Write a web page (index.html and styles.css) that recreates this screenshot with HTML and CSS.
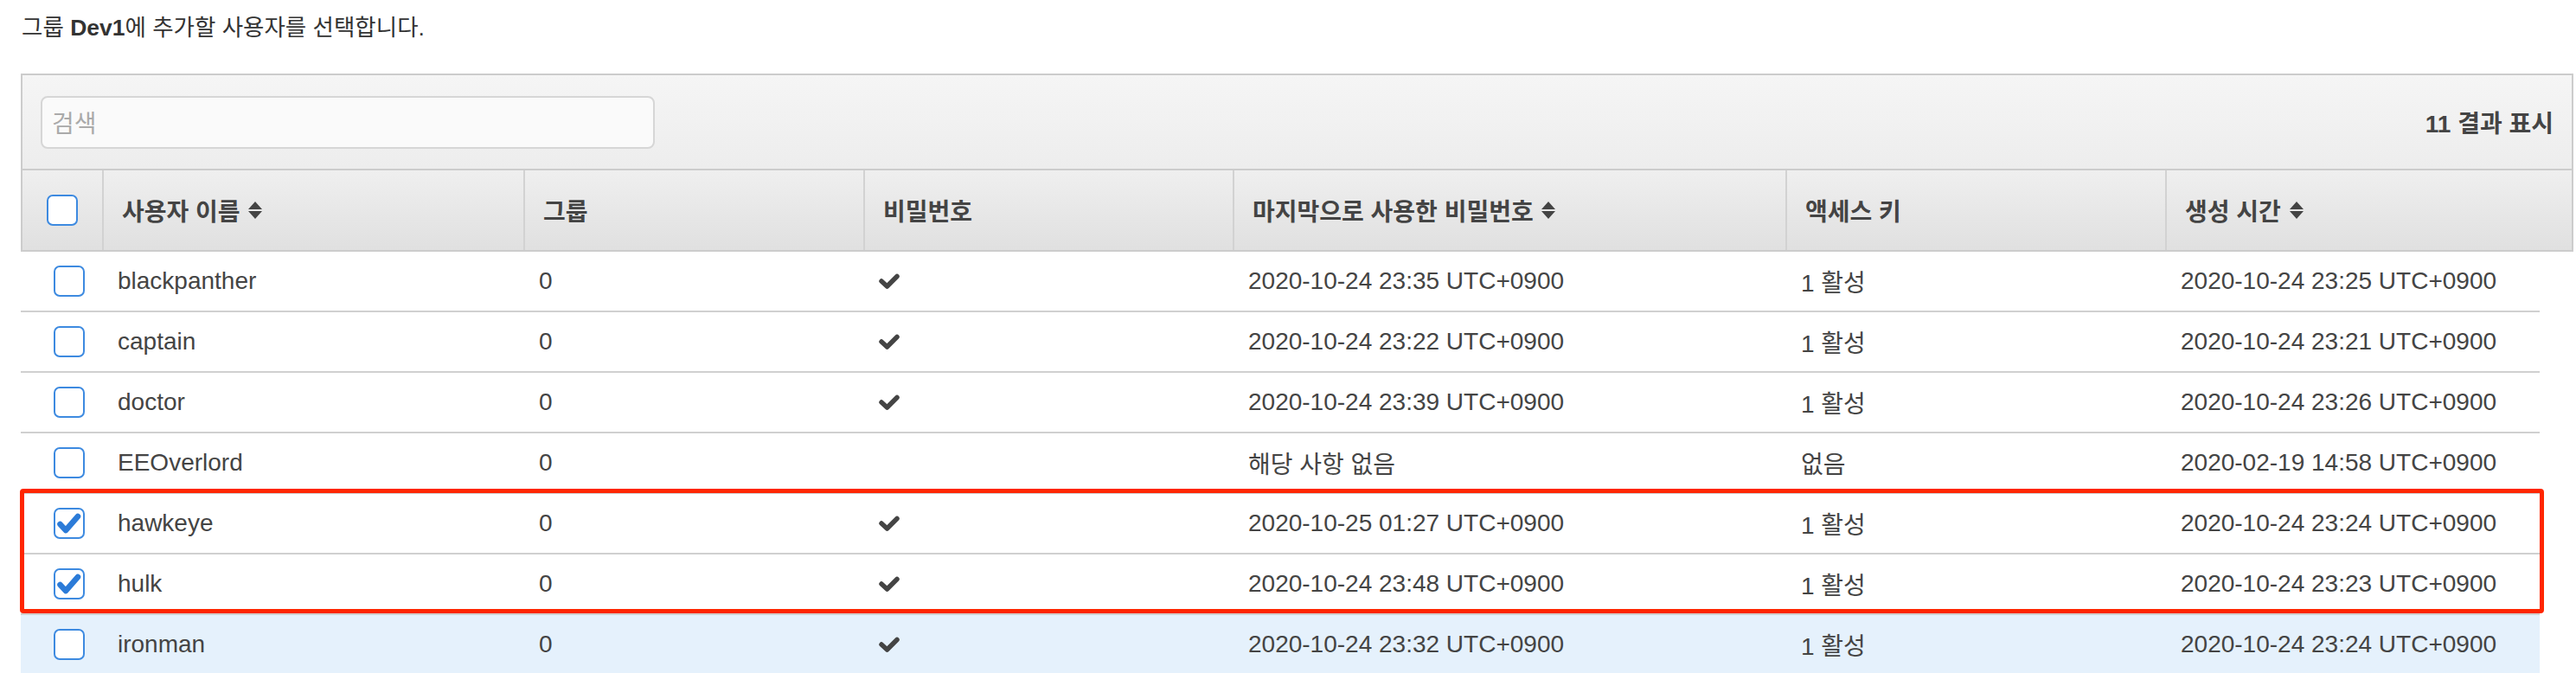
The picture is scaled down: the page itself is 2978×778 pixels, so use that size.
FILE: index.html
```html
<!DOCTYPE html>
<html lang="ko">
<head>
<meta charset="utf-8">
<title>그룹에 사용자 추가</title>
<link rel="stylesheet" href="styles.css">
</head>
<body>
<div class="page">
  <p class="title">그룹 <b>Dev1</b>에 추가할 사용자를 선택합니다.</p>
  <div class="panel">
    <div class="toolbar">
      <div class="search"><span class="placeholder">검색</span></div>
      <div class="count">11 결과 표시</div>
    </div>
    <div class="thead">
      <div class="th th-check"><span class="cb"></span></div>
      <div class="th">사용자 이름 <svg class="sort" viewBox="0 0 16 20"><path d="M0 9 L8 0 L16 9 Z M0 11 L16 11 L8 20 Z"/></svg></div>
      <div class="th">그룹</div>
      <div class="th">비밀번호</div>
      <div class="th">마지막으로 사용한 비밀번호 <svg class="sort" viewBox="0 0 16 20"><path d="M0 9 L8 0 L16 9 Z M0 11 L16 11 L8 20 Z"/></svg></div>
      <div class="th">액세스 키</div>
      <div class="th">생성 시간 <svg class="sort" viewBox="0 0 16 20"><path d="M0 9 L8 0 L16 9 Z M0 11 L16 11 L8 20 Z"/></svg></div>
    </div>
  </div>
  <div class="tbody">
    <div class="row">
      <div class="td td-check"><span class="cb"></span></div>
      <div class="td">blackpanther</div>
      <div class="td">0</div>
      <div class="td"><svg class="ok" viewBox="0 0 24 18"><polyline points="3,9 9.5,15 21,3.5"/></svg></div>
      <div class="td">2020-10-24 23:35 UTC+0900</div>
      <div class="td">1 활성</div>
      <div class="td">2020-10-24 23:25 UTC+0900</div>
    </div>
    <div class="row">
      <div class="td td-check"><span class="cb"></span></div>
      <div class="td">captain</div>
      <div class="td">0</div>
      <div class="td"><svg class="ok" viewBox="0 0 24 18"><polyline points="3,9 9.5,15 21,3.5"/></svg></div>
      <div class="td">2020-10-24 23:22 UTC+0900</div>
      <div class="td">1 활성</div>
      <div class="td">2020-10-24 23:21 UTC+0900</div>
    </div>
    <div class="row">
      <div class="td td-check"><span class="cb"></span></div>
      <div class="td">doctor</div>
      <div class="td">0</div>
      <div class="td"><svg class="ok" viewBox="0 0 24 18"><polyline points="3,9 9.5,15 21,3.5"/></svg></div>
      <div class="td">2020-10-24 23:39 UTC+0900</div>
      <div class="td">1 활성</div>
      <div class="td">2020-10-24 23:26 UTC+0900</div>
    </div>
    <div class="row">
      <div class="td td-check"><span class="cb"></span></div>
      <div class="td">EEOverlord</div>
      <div class="td">0</div>
      <div class="td"></div>
      <div class="td">해당 사항 없음</div>
      <div class="td">없음</div>
      <div class="td">2020-02-19 14:58 UTC+0900</div>
    </div>
    <div class="picked">
      <div class="row">
        <div class="td td-check"><span class="cb checked"><svg viewBox="0 0 36 36"><polyline points="7.5,19 14,26 28,10"/></svg></span></div>
        <div class="td">hawkeye</div>
        <div class="td">0</div>
        <div class="td"><svg class="ok" viewBox="0 0 24 18"><polyline points="3,9 9.5,15 21,3.5"/></svg></div>
        <div class="td">2020-10-25 01:27 UTC+0900</div>
        <div class="td">1 활성</div>
        <div class="td">2020-10-24 23:24 UTC+0900</div>
      </div>
      <div class="row">
        <div class="td td-check"><span class="cb checked"><svg viewBox="0 0 36 36"><polyline points="7.5,19 14,26 28,10"/></svg></span></div>
        <div class="td">hulk</div>
        <div class="td">0</div>
        <div class="td"><svg class="ok" viewBox="0 0 24 18"><polyline points="3,9 9.5,15 21,3.5"/></svg></div>
        <div class="td">2020-10-24 23:48 UTC+0900</div>
        <div class="td">1 활성</div>
        <div class="td">2020-10-24 23:23 UTC+0900</div>
      </div>
    </div>
    <div class="row row-hover">
      <div class="td td-check"><span class="cb"></span></div>
      <div class="td">ironman</div>
      <div class="td">0</div>
      <div class="td"><svg class="ok" viewBox="0 0 24 18"><polyline points="3,9 9.5,15 21,3.5"/></svg></div>
      <div class="td">2020-10-24 23:32 UTC+0900</div>
      <div class="td">1 활성</div>
      <div class="td">2020-10-24 23:24 UTC+0900</div>
    </div>
  </div>
</div>
</body>
</html>
```
FILE: styles.css
```css
* { box-sizing: border-box; }
html, body { margin: 0; padding: 0; background: #fff; }
body {
  width: 2978px;
  height: 778px;
  overflow: hidden;
  font-family: "Liberation Sans", "Noto Sans CJK KR", sans-serif;
  color: #444;
}
.page { padding: 0 3px 0 24px; }
.title {
  margin: 0;
  height: 85px;
  padding: 17px 0 0 1px;
  font-size: 26.5px;
  line-height: 30px;
  color: #333;
}
.panel {
  border: 2px solid #cccccc;
  border-bottom: none;
}
.toolbar {
  height: 110px;
  display: flex;
  align-items: center;
  justify-content: space-between;
  padding: 0 21px 0 21px;
  background: linear-gradient(#f5f5f5, #ededed);
  border-bottom: 2px solid #cccccc;
}
.search {
  width: 710px;
  height: 61px;
  border: 2px solid #d6d6d6;
  border-radius: 8px;
  background: #fafafa;
  display: flex;
  align-items: center;
  padding-left: 11px;
}
.placeholder { font-size: 28px; color: #aaa; }
.count { font-size: 28px; font-weight: bold; color: #444; }
.thead {
  display: grid;
  grid-template-columns: 92px 487px 393px 427px 639px 439px 1fr;
  height: 94px;
  background: linear-gradient(#efefef, #e0e0e0);
  border-bottom: 2px solid #cccccc;
}
.th {
  display: flex;
  align-items: center;
  padding-left: 21px;
  font-size: 28px;
  font-weight: bold;
  color: #444;
  white-space: pre;
}
.th + .th { border-left: 2px solid #d2d2d2; }
.th-check, .td-check { justify-content: center; padding-left: 0; }
.sort { width: 16px; height: 20px; fill: #444; margin-left: 2px; }
.tbody { margin-right: 39px; }
.row {
  display: grid;
  grid-template-columns: 94px 487px 393px 427px 639px 439px 1fr;
  height: 70px;
  border-bottom: 2px solid #d0d0d0;
  background: #fff;
}
.row-hover { background: #e5f1fc; }
.td {
  display: flex;
  align-items: center;
  padding-left: 18px;
  font-size: 28px;
  color: #444;
  white-space: pre;
}
.cb {
  display: block;
  width: 36px;
  height: 36px;
  border: 2px solid #3d8ae0;
  border-radius: 7px;
  background: #fff;
  position: relative;
}
.cb svg {
  position: absolute;
  left: -2px;
  top: -2px;
  width: 36px;
  height: 36px;
  fill: none;
  stroke: #2b7bd8;
  stroke-width: 6.5;
  stroke-linecap: round;
  stroke-linejoin: round;
}
.ok {
  width: 24px;
  height: 18px;
  fill: none;
  stroke: #444;
  stroke-width: 5.5;
  stroke-linecap: round;
  stroke-linejoin: round;
}
.picked { position: relative; }
.picked::after {
  content: "";
  position: absolute;
  top: -6px;
  left: -1px;
  right: -5px;
  bottom: 2px;
  border: 5px solid #ff2600;
  border-radius: 4px;
  pointer-events: none;
}
```
